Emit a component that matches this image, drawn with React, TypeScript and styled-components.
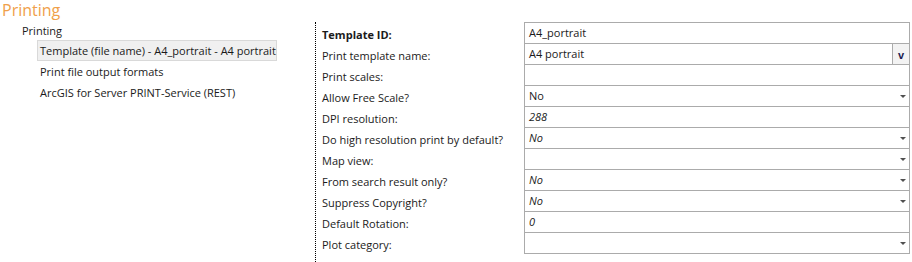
import React from "react";
import styled, { createGlobalStyle } from "styled-components";

const Global = createGlobalStyle`
  html, body { margin: 0; padding: 0; background: #ffffff; }
  body {
    font-family: "Open Sans", "Noto Sans", sans-serif;
    font-size: 11px;
    color: #1a1a1a;
    width: 912px;
    height: 262px;
    overflow: hidden;
  }
`;

const Page = styled.div`
  width: 912px;
  height: 262px;
  display: flex;
  flex-direction: column;
`;

const Heading = styled.h1`
  margin: 0;
  height: 22px;
  padding-left: 2px;
  font-size: 16px;
  font-weight: 400;
  line-height: 20px;
  color: #f0a04a;
`;

const Body = styled.div`
  flex: 1;
  display: flex;
`;

const Tree = styled.div`
  width: 315px;
  flex: none;
  display: flex;
  flex-direction: column;
`;

const TreeRoot = styled.div`
  height: 18px;
  line-height: 18px;
  padding-left: 22px;
`;

const TreeList = styled.div`
  display: flex;
  flex-direction: column;
  align-items: flex-start;
  padding-left: 37px;
`;

const TreeItem = styled.div<{ $selected?: boolean }>`
  box-sizing: border-box;
  height: 21px;
  line-height: 19px;
  padding: 0 2px;
  width: 240px;
  border: 1px solid ${(p) => (p.$selected ? "#d9d9d9" : "transparent")};
  background: ${(p) => (p.$selected ? "#f0f0f0" : "transparent")};
  white-space: nowrap;
`;

const FormPanel = styled.div`
  flex: 1;
  border-left: 1px dotted #000;
  padding-left: 6px;
`;

const Grid = styled.div`
  display: grid;
  grid-template-columns: 202px 386px;
  grid-auto-rows: 21px;
`;

const Label = styled.div<{ $bold?: boolean }>`
  padding-top: 2px;
  line-height: 21px;
  height: 19px;
  font-weight: ${(p) => (p.$bold ? 700 : 400)};
  white-space: nowrap;
`;

const Field = styled.div`
  box-sizing: border-box;
  height: 22px;
  border: 1px solid #ababab;
  background: #fff;
  display: flex;
  align-items: stretch;
  position: relative;
  z-index: 1;
`;

const Value = styled.div<{ $italic?: boolean }>`
  flex: 1;
  padding-left: 4px;
  line-height: 19px;
  font-style: ${(p) => (p.$italic ? "italic" : "normal")};
  white-space: nowrap;
`;

const Arrow = styled.span`
  align-self: center;
  margin-right: 3px;
  margin-top: 1px;
  width: 0;
  height: 0;
  border-left: 3px solid transparent;
  border-right: 3px solid transparent;
  border-top: 3px solid #505050;
`;

const DropButton = styled.div`
  width: 16px;
  border-left: 1px solid #ababab;
  background: #f3f3f3;
  display: flex;
  align-items: center;
  justify-content: center;
  font-family: "Liberation Sans", Arial, sans-serif;
  font-weight: 700;
  font-size: 11px;
  color: #1a1a50;
  padding-top: 1px;
`;

type Row = {
  label: string;
  value?: string;
  bold?: boolean;
  italic?: boolean;
  kind?: "text" | "select" | "combo";
};

const rows: Row[] = [
  { label: "Template ID:", value: "A4_portrait", bold: true },
  { label: "Print template name:", value: "A4 portrait", kind: "combo" },
  { label: "Print scales:" },
  { label: "Allow Free Scale?", value: "No", kind: "select" },
  { label: "DPI resolution:", value: "288", italic: true },
  { label: "Do high resolution print by default?", value: "No", italic: true, kind: "select" },
  { label: "Map view:", kind: "select" },
  { label: "From search result only?", value: "No", italic: true, kind: "select" },
  { label: "Suppress Copyright?", value: "No", italic: true, kind: "select" },
  { label: "Default Rotation:", value: "0", italic: true },
  { label: "Plot category:", kind: "select" },
];

export default function App() {
  return (
    <Page>
      <Global />
      <Heading>Printing</Heading>
      <Body>
        <Tree>
          <TreeRoot>Printing</TreeRoot>
          <TreeList>
            <TreeItem $selected>Template (file name) - A4_portrait - A4 portrait</TreeItem>
            <TreeItem>Print file output formats</TreeItem>
            <TreeItem>ArcGIS for Server PRINT-Service (REST)</TreeItem>
          </TreeList>
        </Tree>
        <FormPanel>
          <Grid>
            {rows.map((r) => (
              <React.Fragment key={r.label}>
                <Label $bold={r.bold}>{r.label}</Label>
                <Field>
                  <Value $italic={r.italic}>{r.value ?? ""}</Value>
                  {r.kind === "select" && <Arrow />}
                  {r.kind === "combo" && <DropButton>v</DropButton>}
                </Field>
              </React.Fragment>
            ))}
          </Grid>
        </FormPanel>
      </Body>
    </Page>
  );
}
